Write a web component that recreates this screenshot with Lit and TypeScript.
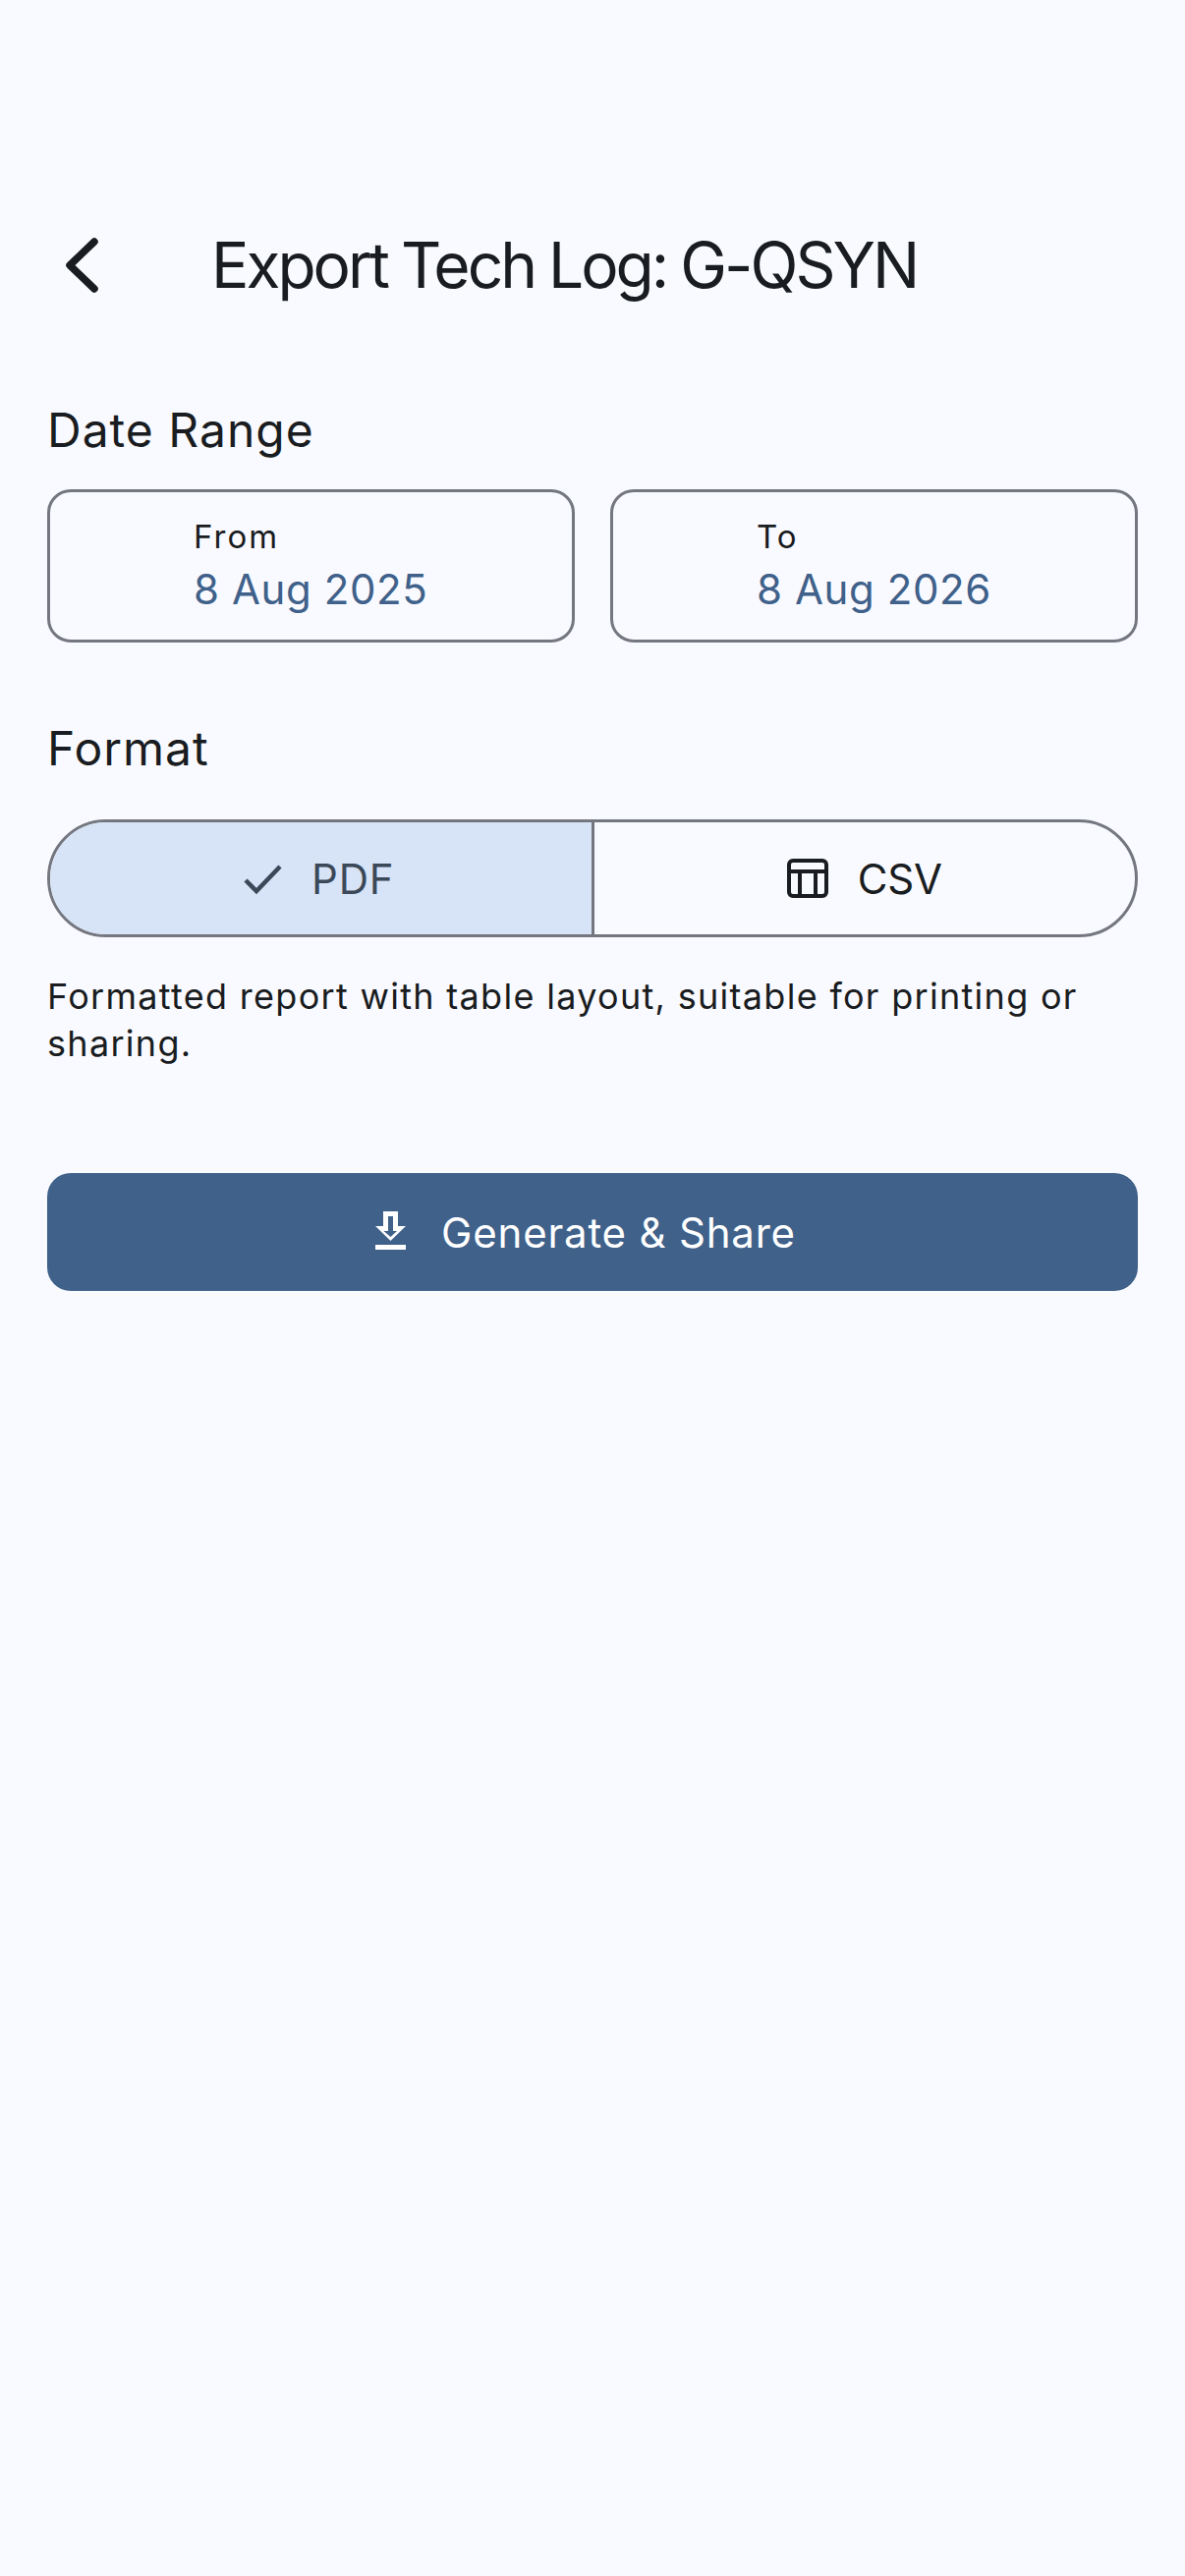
import { LitElement, html, css } from "lit";
import { customElement } from "lit/decorators.js";

@customElement("app-root")
export class AppRoot extends LitElement {
  static styles = css`
    :host { display: block; width: 1206px; height: 2622px; background: #f9faff; font-family: Inter, "Liberation Sans", sans-serif; color: #191c20; overflow: hidden; }
    .bar { display: flex; align-items: center; height: 168px; margin-top: 186px; }
    .back { width: 215px; padding-left: 60px; box-sizing: border-box; display: flex; flex: none; }
    .title { font-size: 64px; line-height: 84px; font-weight: 400; letter-spacing: -3px; word-spacing: -1px; white-space: nowrap; }
    .body { padding: 0 48px; display: flex; flex-direction: column; }
    .label { font-size: 48px; line-height: 72px; font-weight: 400; letter-spacing: 1px; }
    .l1 { margin-top: 48px; }
    .dates { display: flex; gap: 36px; margin-top: 24px; }
    .date { flex: 1; height: 156px; box-sizing: border-box; border: 3px solid #74777f; border-radius: 24px; padding: 24px 0 0 146px; display: flex; flex-direction: column; }
    .small { font-size: 33px; line-height: 42px; letter-spacing: 2px; }
    .val { font-size: 42px; line-height: 66px; color: #3f618a; letter-spacing: 0.6px; }
    .l2 { margin-top: 72px; }
    .seg { display: flex; height: 120px; margin-top: 36px; border: 3px solid #74777f; border-radius: 60px; overflow: hidden; box-sizing: border-box; }
    .opt { flex: 1; display: flex; align-items: center; justify-content: center; font-size: 42px; font-weight: 400; letter-spacing: 0.8px; }
    .on { background: #d7e3f6; color: #3b4858; border-right: 3px solid #74777f; gap: 24px; }
    .off { gap: 30px; letter-spacing: -0.2px; }
    .help { font-size: 36px; line-height: 48px; letter-spacing: 1.3px; margin-top: 36px; }
    .cta { height: 120px; margin-top: 108px; padding-right: 15px; background: #3f618a; border-radius: 24px; color: #fff; display: flex; align-items: center; justify-content: center; gap: 34px; font-size: 42px; font-weight: 400; letter-spacing: 0.8px; }
    svg { display: block; flex: none; overflow: visible; }
    .dl { margin-bottom: 3px; }
  `;
  render() {
    return html`
      <div class="bar">
        <div class="back">
          <svg width="40" height="66" viewBox="0 0 40 66" fill="none" stroke="#191c20" stroke-width="7.5" stroke-linecap="round" stroke-linejoin="round"><path d="M36 9 L11 33 L36 57"/></svg>
        </div>
        <div class="title">Export Tech Log: G-QSYN</div>
      </div>
      <div class="body">
        <div class="label l1">Date Range</div>
        <div class="dates">
          <div class="date"><span class="small">From</span><span class="val">8 Aug 2025</span></div>
          <div class="date"><span class="small">To</span><span class="val">8 Aug 2026</span></div>
        </div>
        <div class="label l2">Format</div>
        <div class="seg">
          <div class="opt on">
            <svg width="42" height="36" viewBox="0 0 42 36" fill="none" stroke="#3b4858" stroke-width="4.5"><path d="M-1 20 L10 31 L34 6"/></svg>
            <span>PDF</span>
          </div>
          <div class="opt off">
            <svg width="42" height="40" viewBox="0 0 42 40" fill="none" stroke="#191c20" stroke-width="4"><rect x="2" y="2" width="38" height="36" rx="4"/><path d="M2 13 H40 M13 13 V38 M29 13 V38"/></svg>
            <span>CSV</span>
          </div>
        </div>
        <div class="help">Formatted report with table layout, suitable for printing or sharing.</div>
        <div class="cta">
          <svg class="dl" width="34" height="40" viewBox="0 0 34 40" fill="#fff"><path fill-rule="evenodd" d="M9 0 H24 V15 H32 L16.5 30 L1 15 H9 Z M14 5 V20 H9.5 L16.5 26 L23 20 H19 V5 Z"/><rect x="1" y="34" width="31" height="5"/></svg>
          <span>Generate &amp; Share</span>
        </div>
      </div>
    `;
  }
}
